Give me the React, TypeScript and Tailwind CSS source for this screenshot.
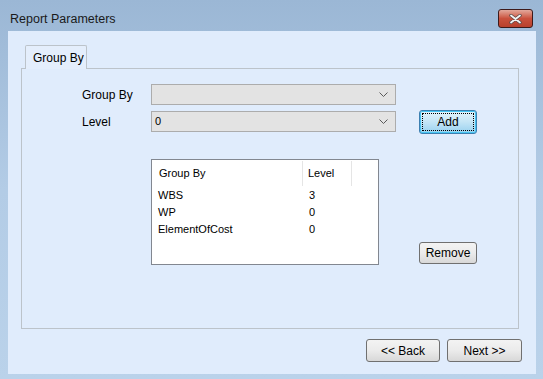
import React from "react";

const font = { fontFamily: '"Liberation Sans", Arial, sans-serif' };

const rows = [
  { name: "WBS", level: "3" },
  { name: "WP", level: "0" },
  { name: "ElementOfCost", level: "0" },
];

function Chevron() {
  return (
    <svg width="9" height="6" viewBox="0 0 9 6" className="shrink-0">
      <path d="M0.5 0.5 L4.5 4.5 L8.5 0.5" fill="none" stroke="#5a5a5a" strokeWidth="1" />
    </svg>
  );
}

function Combo({ value }: { value?: string }) {
  return (
    <div className="w-[245px] h-[21px] border border-[#acacac] bg-[#e3e3e3] flex items-center justify-between pl-[3px] pr-[7px] text-[11px] text-black">
      <span>{value ?? ""}</span>
      <Chevron />
    </div>
  );
}

function GrayButton({ label, w, h }: { label: string; w: number; h: number }) {
  return (
    <button
      className="border border-[#707070] rounded-[3px] bg-gradient-to-b from-[#f3f3f3] via-[#ebebeb] to-[#d8d8d8] text-[12px] text-black flex items-center justify-center"
      style={{ width: w, height: h }}
    >
      {label}
    </button>
  );
}

export default function App() {
  return (
    <div
      className="w-[543px] h-[379px] bg-gradient-to-b from-[#9bb7d5] via-[#b3cce6] to-[#bad2ea] flex flex-col overflow-hidden"
      style={font}
    >
      {/* Title bar */}
      <div className="h-[31px] flex items-start justify-between pl-[10px] pr-[10px]">
        <span className="mt-[10px] text-[12.5px] text-[#1a1a1a]">Report Parameters</span>
        <div className="mt-[9px] w-[35px] h-[19px] rounded-[3px] border border-[#3d1a1a] bg-gradient-to-b from-[#e2a89c] via-[#c9513d] to-[#b8402c] flex items-center justify-center">
          <svg width="13" height="10" viewBox="0 0 13 10">
            <path d="M2 1.5 L11 8.5 M11 1.5 L2 8.5" stroke="#5a4a4a" strokeWidth="3.4" strokeLinecap="round" />
            <path d="M2 1.5 L11 8.5 M11 1.5 L2 8.5" stroke="#f4f4f4" strokeWidth="1.8" strokeLinecap="round" />
          </svg>
        </div>
      </div>

      {/* Client area */}
      <div className="ml-[8px] mr-[7px] h-[343px] bg-[#e0ecfc] flex flex-col pl-[13px]">
        {/* Tab header */}
        <div className="mt-[14px] ml-[4px] w-[62px] h-[24px] border border-b-0 border-[#bcc3ca] rounded-t-[2px] bg-[#e4eefc] text-[12px] text-black flex items-center pl-[7px] relative z-10 -mb-px">
          Group By
        </div>

        {/* Tab panel */}
        <div className="w-[498px] h-[261px] border border-[#bcc3ca] bg-[#e0ecfc] pl-[60px] pt-[15px] flex flex-col">
          <div className="flex items-center h-[21px]">
            <span className="w-[69px] text-[12px] text-black">Group By</span>
            <Combo />
          </div>
          <div className="flex items-center mt-[6px] h-[21px]">
            <span className="w-[69px] text-[12px] text-black">Level</span>
            <Combo value="0" />
            <button className="ml-[23px] mt-[1px] w-[58px] h-[24px] rounded-[3px] border border-[#3c7fb1] bg-gradient-to-b from-[#e5f4fc] via-[#c4e5f6] to-[#98d1ef] p-[2px] shadow-[inset_0_0_0_1px_#48c6f3]">
              <div className="w-full h-full border border-dotted border-black flex items-center justify-center text-[12px] text-black">
                Add
              </div>
            </button>
          </div>

          <div className="flex items-end mt-[27px] ml-[69px]">
            <div className="w-[228px] h-[106px] border border-[#828790] bg-white flex flex-col text-[11px] text-black">
              <div className="flex h-[27px] items-center">
                <span className="w-[151px] pl-[7px] h-[25px] flex items-center border-r border-[#e5e5e5]">Group By</span>
                <span className="w-[49px] pl-[5px] h-[25px] flex items-center border-r border-[#e5e5e5]">Level</span>
              </div>
              {rows.map((r) => (
                <div key={r.name} className="flex h-[17px] items-center">
                  <span className="w-[151px] pl-[6px]">{r.name}</span>
                  <span className="pl-[6px]">{r.level}</span>
                </div>
              ))}
            </div>
            <div className="ml-[40px] mb-[1px]">
              <GrayButton label="Remove" w={58} h={22} />
            </div>
          </div>
        </div>

        {/* Wizard buttons */}
        <div className="flex justify-end gap-[7px] mt-[10px] pr-[14px]">
          <GrayButton label="<< Back" w={74} h={23} />
          <GrayButton label="Next >>" w={75} h={23} />
        </div>
      </div>
    </div>
  );
}
